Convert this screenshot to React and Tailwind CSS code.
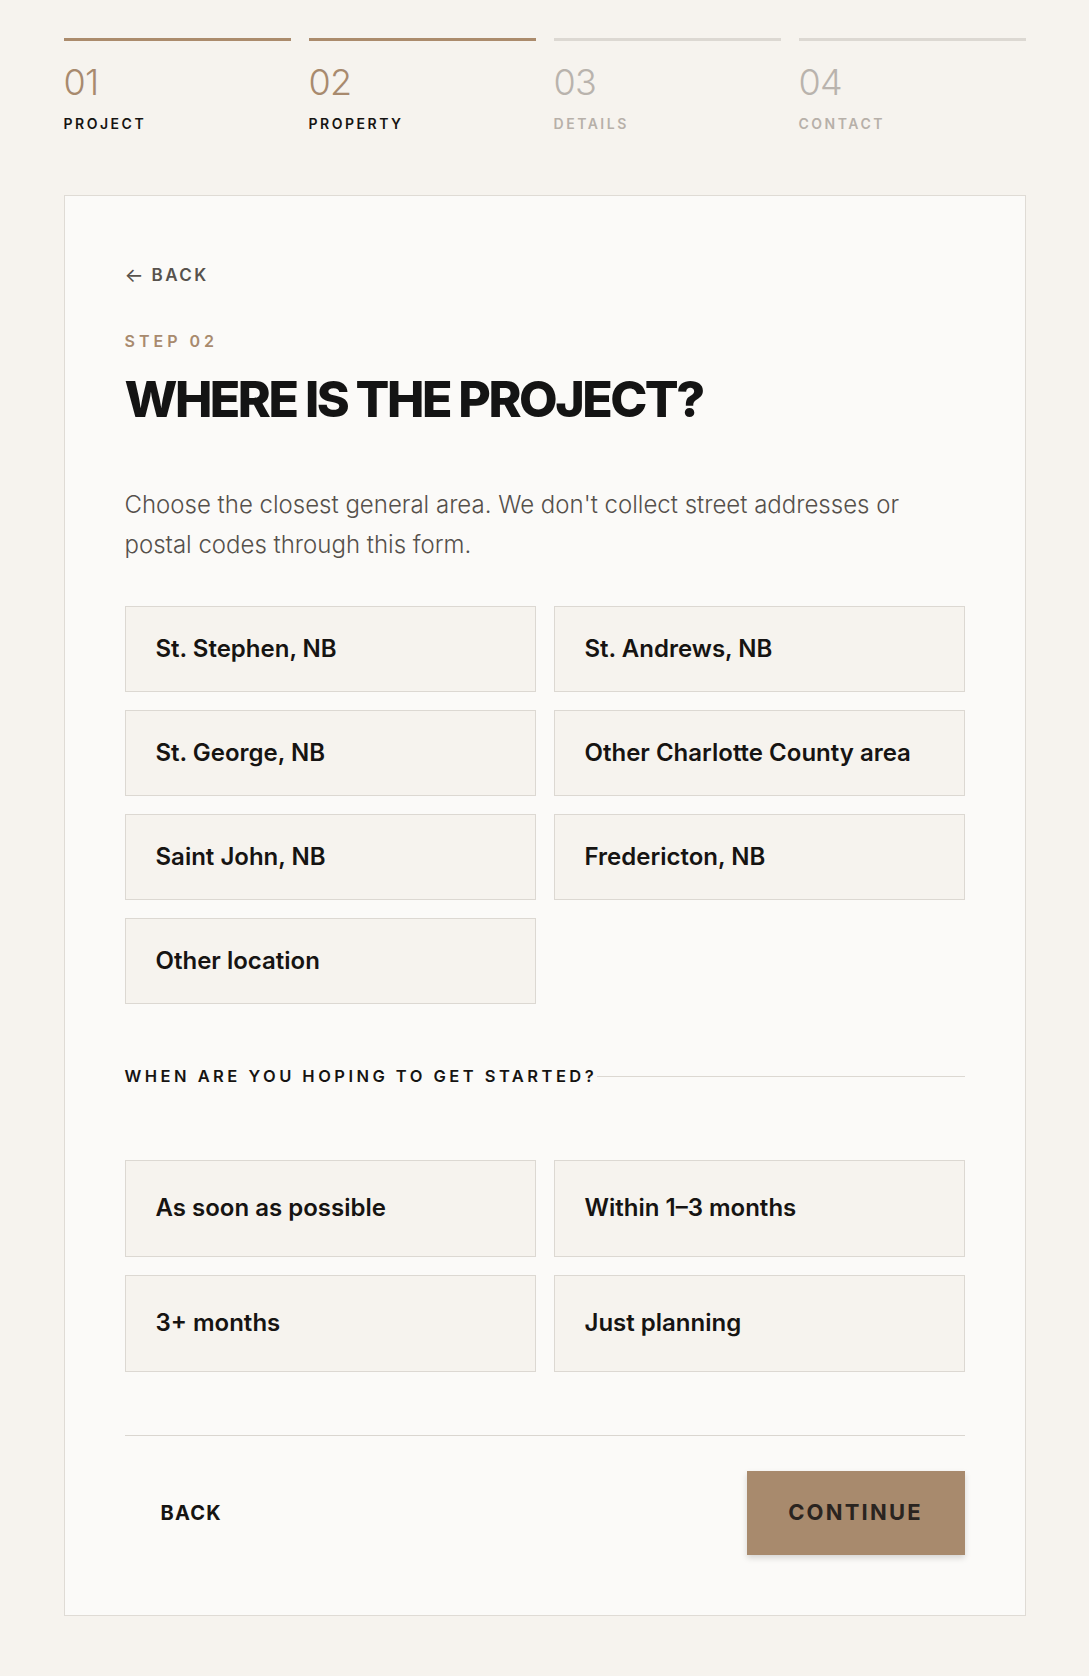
import React, { useState } from 'react';

const steps = [
  { num: '01', label: 'PROJECT', done: true },
  { num: '02', label: 'PROPERTY', done: true },
  { num: '03', label: 'DETAILS', done: false },
  { num: '04', label: 'CONTACT', done: false },
];

const locations = [
  'St. Stephen, NB',
  'St. Andrews, NB',
  'St. George, NB',
  'Other Charlotte County area',
  'Saint John, NB',
  'Fredericton, NB',
  'Other location',
];

const timings = ['As soon as possible', 'Within 1–3 months', '3+ months', 'Just planning'];

export default function App() {
  const [ubicacion, setUbicacion] = useState('');
  const [plazo, setPlazo] = useState('');

  return (
    <div className="min-h-screen bg-[#f6f3ee] font-['Inter',sans-serif] text-[#161412] pt-[38px] pb-[61px]">
      <div className="mx-auto w-[962px]">
        {/* progreso */}
        <div className="grid grid-cols-4 gap-[18px]">
          {steps.map((s) => (
            <div key={s.num}>
              <div className={`h-[3px] ${s.done ? 'bg-[#ab8b6c]' : 'bg-[#dcd8d2]'}`} />
              <div
                className={`mt-[23px] text-[36px] font-light leading-none tracking-[-0.02em] ${
                  s.done ? 'text-[#a88a6e]' : 'text-[#b9b3ad]'
                }`}
              >
                {s.num}
              </div>
              <div
                className={`mt-[17px] text-[14px] font-semibold leading-none tracking-[0.18em] ${
                  s.done ? 'text-[#161412]' : 'text-[#b7b0a9]'
                }`}
              >
                {s.label}
              </div>
            </div>
          ))}
        </div>

        {/* tarjeta */}
        <div className="mt-[64px] border border-[#dfdbd5] bg-[#fbfaf8] px-[60px] pt-[60px] pb-[60px]">
          <button className="mt-[9px] flex items-center gap-[8px] text-[17px] font-semibold leading-none tracking-[0.14em] text-[#57524d]">
            <span className="text-[20px] tracking-normal font-normal">←</span>
            BACK
          </button>

          <div className="mt-[48px] text-[16px] font-semibold leading-none tracking-[0.25em] text-[#a88a6e]">
            STEP 02
          </div>

          <h1 className="mt-[25px] text-[50px] font-extrabold leading-none tracking-[-0.05em] text-[#141414]">
            WHERE IS THE PROJECT?
          </h1>

          <p className="mt-[61px] w-[800px] text-[24px] font-light leading-[40px] text-[#55504b]">
            Choose the closest general area. We don't collect street addresses or postal codes through this form.
          </p>

          <div className="mt-[41px] grid grid-cols-2 gap-[18px]">
            {locations.map((l) => (
              <button
                key={l}
                onClick={() => setUbicacion(l)}
                className={`h-[86px] border px-[30px] text-left text-[24px] font-semibold text-[#161412] ${
                  ubicacion === l ? 'border-[#a88a6e] bg-[#efe8df]' : 'border-[#dcd8d2] bg-[#f6f3ee]'
                }`}
              >
                {l}
              </button>
            ))}
          </div>

          <div className="mt-[64px] flex items-center">
            <span className="text-[16.5px] font-semibold leading-none tracking-[0.21em] text-[#161412] whitespace-nowrap">
              WHEN ARE YOU HOPING TO GET STARTED?
            </span>
            <div className="h-px flex-1 bg-[#dcd8d2]" />
          </div>

          <div className="mt-[75px] grid grid-cols-2 gap-[18px]">
            {timings.map((t) => (
              <button
                key={t}
                onClick={() => setPlazo(t)}
                className={`h-[97px] border px-[30px] text-left text-[24px] font-semibold text-[#161412] ${
                  plazo === t ? 'border-[#a88a6e] bg-[#efe8df]' : 'border-[#dcd8d2] bg-[#f6f3ee]'
                }`}
              >
                {t}
              </button>
            ))}
          </div>

          <div className="mt-[63px] h-px bg-[#dad6d0]" />

          <div className="mt-[35px] flex items-center justify-between">
            <button className="px-[36px] text-[20px] font-bold tracking-[0.06em] text-[#161412]">BACK</button>
            <button className="h-[84px] w-[218px] bg-[#a88a6d] text-[22px] font-bold tracking-[0.1em] text-[#2a2420] shadow-[0_3px_6px_rgba(0,0,0,0.15)]">
              CONTINUE
            </button>
          </div>
        </div>
      </div>
    </div>
  );
}
